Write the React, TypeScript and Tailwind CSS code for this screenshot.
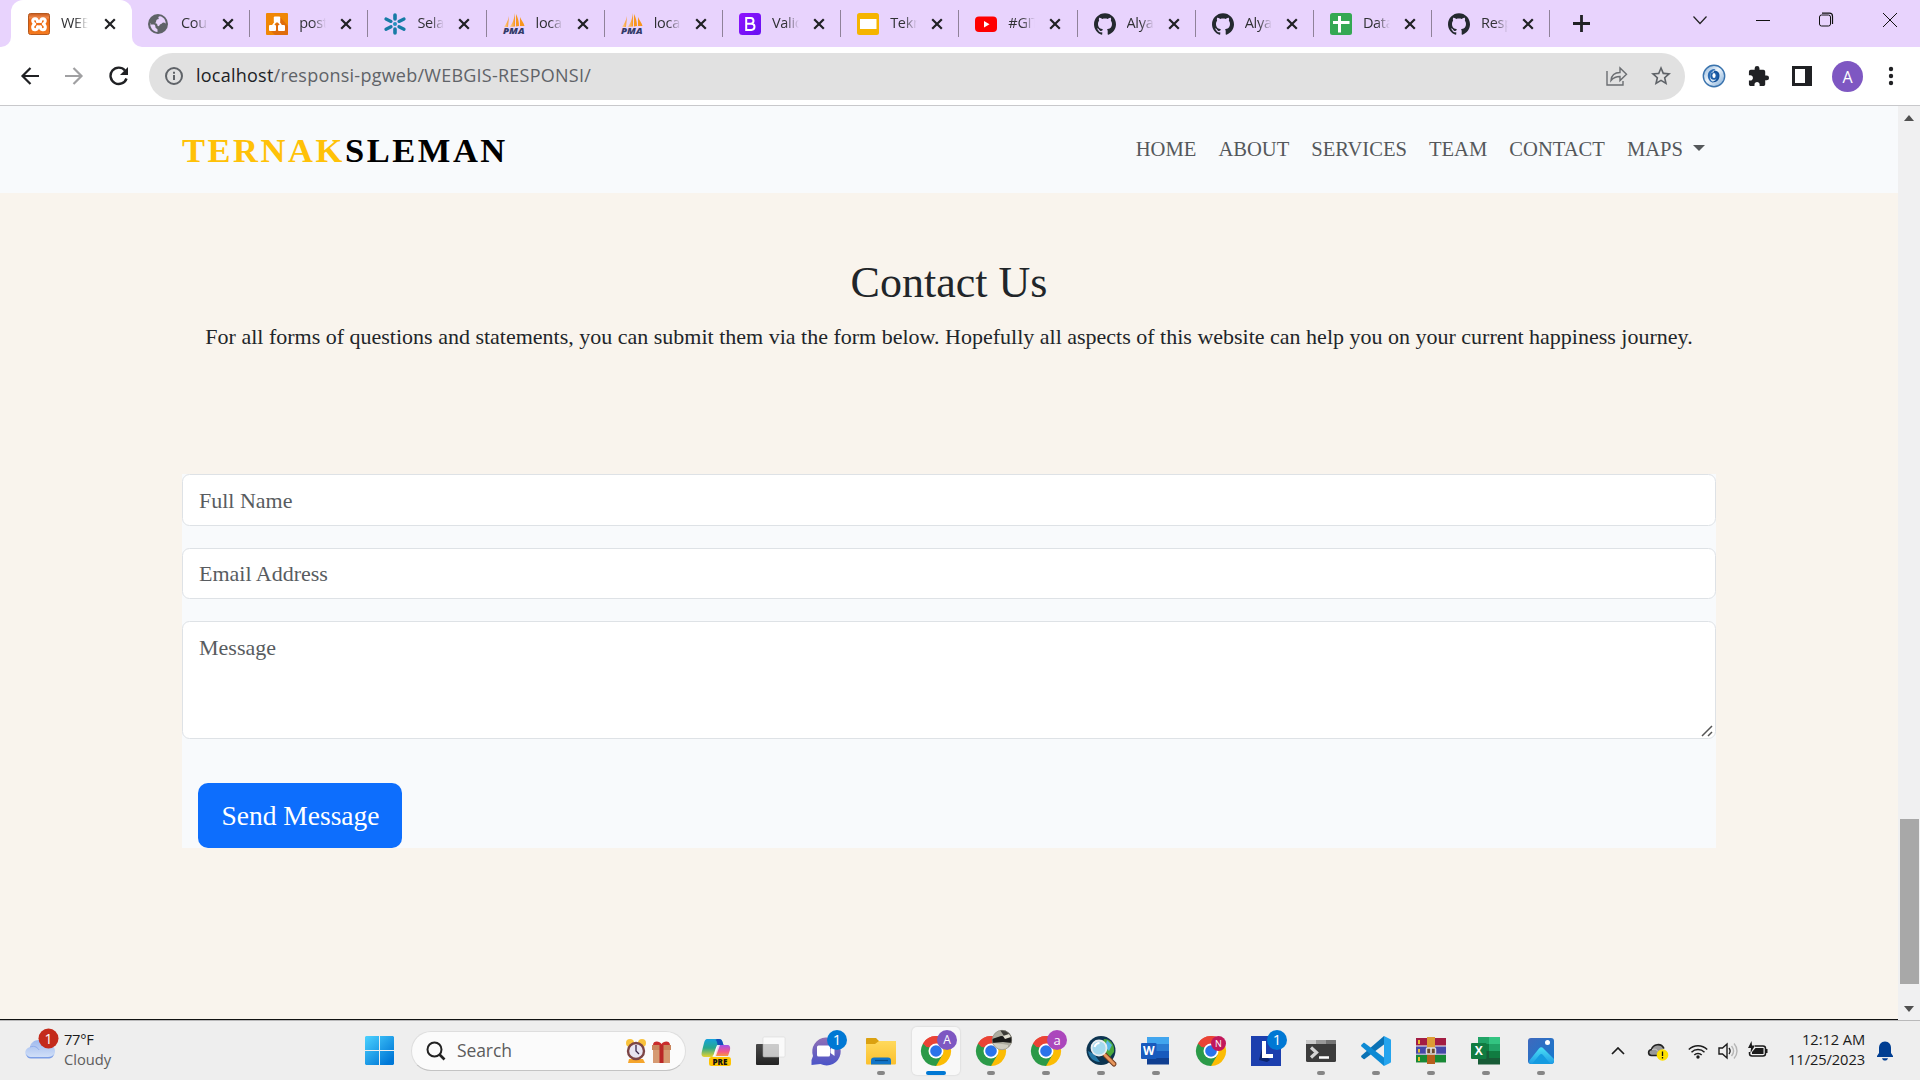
import React from "react";
import type { ReactNode } from "react";
import { SiGithub } from "react-icons/si";
import { MdStarBorder, MdExtension } from "react-icons/md";

const UI = "font-['Open_Sans','Noto_Sans',sans-serif]";
const SERIF = "font-['Liberation_Serif',serif]";

/* ---------- tab icons ---------- */
const svg22 = "block h-[22px] w-[22px] shrink-0 overflow-visible";

function Xampp() {
  return (
    <svg viewBox="0 0 22 22" className={svg22}>
      <defs>
        <linearGradient id="xa" x2="0" y2="1">
          <stop offset="0" stopColor="#c8591c" /><stop offset=".2" stopColor="#f08a4a" /><stop offset=".3" stopColor="#ec6510" /><stop offset="1" stopColor="#f47b20" />
        </linearGradient>
      </defs>
      <rect x=".5" y=".5" width="21" height="21" rx="2" fill="url(#xa)" stroke="#b4581e" />
      <g fill="none" stroke="#fff" strokeWidth="3" strokeLinecap="round" strokeLinejoin="round">
        <path d="M9.500 8.500C9.500 4.800 4.500 5 4.700 8c.1 1.500 1 2.300 2 3-1.500 1-2.200 2-2 3.500.3 3 5 3 5-.8M12.500 8.500C12.500 4.800 17.500 5 17.300 8c-.1 1.500-1 2.300-2 3 1.500 1 2.200 2 2 3.500-.3 3-5 3-5-.8" />
        <path d="M9.500 8.500h3M9.500 13.700h3" strokeWidth="2.600" />
      </g>
    </svg>
  );
}
function Globe() {
  return (
    <svg viewBox="0 0 22 22" className={svg22}>
      <circle cx="10" cy="11" r="10" fill="#5f6368" />
      <path d="M12 3.300 C10 3.500 10 5 11 6 C9 6 8 7 8 9 C8 10 6.500 10 5.500 10 H2.200 C2 13 3 15.500 5 17 C6.500 18 8 18.700 9.500 18.800 V16 C8 15.500 8.500 14 10 13.500 C12 13 11 11.500 13 11 C14 11 14 9.500 15.500 9.500 C17 9.500 17.500 10.500 17.700 11 C18 7 15.500 4 12 3.300Z" fill="#e8d3fd" />
      <path d="M2.500 10h4c2 0 3 1 3 2.500s3.500 1 4 3L10 20l-5-2-3-4z" fill="#5f6368" />
      <path d="M2.300 11.500h3.500c1.500 0 1.700 2 1.700 3s2 1 2 2v2.400C5.500 18.800 2.500 15.500 2.300 11.500Z" fill="#e8d3fd" />
    </svg>
  );
}
function Drawio() {
  return (
    <svg viewBox="0 0 22 22" className={svg22}>
      <rect width="22" height="22" rx="1" fill="#f08705" />
      <path d="M14 4l8 9v8a1 1 0 0 1-1 1H9l-5-5 6-6z" fill="#df6c0c" />
      <path d="M10 8l-3.500 5M12 8l3.500 5" stroke="#fff" strokeWidth="1.800" />
      <rect x="7.800" y="3.500" width="6.400" height="6" rx="1" fill="#fff" />
      <rect x="3" y="12" width="7" height="6" rx="1" fill="#fff" />
      <rect x="12" y="12" width="7" height="6" rx="1" fill="#fff" />
    </svg>
  );
}
function Snow() {
  return (
    <svg viewBox="0 0 22 22" className={svg22}>
      <g stroke="#177ba6" strokeWidth="3.600" strokeLinecap="round" fill="none">
        <path d="M11 2v4M11 16v4" />
        <path d="M2 6l5 2.400M20 6l-5 2.400M2 16.200l5-2.500M20 16.200l-5-2.500" strokeWidth="3.300" />
      </g>
      <circle cx="11" cy="11" r="2" fill="#2691bd" />
    </svg>
  );
}
function Pma() {
  return (
    <svg viewBox="0 0 22 22" className={svg22}>
      <defs><linearGradient id="pm"><stop offset="0" stopColor="#fbd9b0" /><stop offset="1" stopColor="#f8961d" /></linearGradient></defs>
      <path d="M6 3L5 14H1C3 11 5 8 6 3Z" fill="url(#pm)" />
      <path d="M12 0C11 6 10 10 6.500 14L12 13.500Z" fill="url(#pm)" />
      <path d="M13 1C15 5 16 9 16 13l-3 .5ZM17 4c1 3 4 6 4.500 9L17 13Z" fill="#f8961d" />
      <text x="0" y="21" fontSize="8.500" fontWeight="800" fontStyle="italic" fontFamily="Open Sans" fill="#333a68" textLength="21.500" lengthAdjust="spacingAndGlyphs">PMA</text>
    </svg>
  );
}
function Boot() {
  return (
    <svg viewBox="0 0 22 22" className={svg22}>
      <defs><linearGradient id="bs" x2="1" y2="1"><stop offset="0" stopColor="#9013fe" /><stop offset="1" stopColor="#6610f2" /></linearGradient></defs>
      <rect width="22" height="22" rx="3.500" fill="url(#bs)" />
      <path d="M7.200 5h4.700a2.900 2.900 0 0 1 .4 5.700H7.200zM7.200 10.700h5.200a3.100 3.100 0 0 1 0 6.200H7.200z" fill="none" stroke="#fff" strokeWidth="2" />
    </svg>
  );
}
function Slides() {
  return (
    <svg viewBox="0 0 22 22" className={svg22}>
      <rect width="22" height="22" rx="2.500" fill="#f5b400" /><rect x="3" y="6" width="16.500" height="10" fill="#fff" />
    </svg>
  );
}
function Youtube() {
  return (
    <svg viewBox="0 0 22 22" className={svg22}>
      <rect y="3.500" width="22" height="15.500" rx="4" fill="#f00" /><path d="M9 8v6.500l5.500-3.250z" fill="#fff" />
    </svg>
  );
}
function Github() {
  return <SiGithub className="block h-[22px] w-[22px] shrink-0 text-[#24292f]" />;
}
function Sheets() {
  return (
    <svg viewBox="0 0 22 22" className={svg22}>
      <rect width="22" height="22" rx="2.500" fill="#34a853" /><path d="M9.500 3v16.500M3 9.500h16.500" stroke="#fff" strokeWidth="3" />
    </svg>
  );
}

const tabs: { icon: ReactNode; title: string }[] = [
  { icon: <Globe />, title: "Cour" },
  { icon: <Drawio />, title: "post" },
  { icon: <Snow />, title: "Sela" },
  { icon: <Pma />, title: "loca" },
  { icon: <Pma />, title: "loca" },
  { icon: <Boot />, title: "Valid" },
  { icon: <Slides />, title: "Tekn" },
  { icon: <Youtube />, title: "#GIT" },
  { icon: <Github />, title: "Alya" },
  { icon: <Github />, title: "Alya" },
  { icon: <Sheets />, title: "Data" },
  { icon: <Github />, title: "Resp" },
];

function CloseX() {
  return (
    <svg viewBox="0 0 12 12" className="block h-3 w-3 shrink-0">
      <path d="M1.200 1.200l9.600 9.600M10.800 1.200L1.200 10.800" stroke="#202124" strokeWidth="2.200" />
    </svg>
  );
}
function TabTitle({ children }: { children: ReactNode }) {
  return (
    <span className="ml-[11px] w-[27px] shrink-0 overflow-hidden whitespace-nowrap pb-px text-[14.5px] leading-[22px] tracking-[-0.3px] text-[#303134] [mask-image:linear-gradient(to_right,black_50%,transparent)]">
      {children}
    </span>
  );
}

function TabStrip() {
  return (
    <div className="flex h-[47px] shrink-0 bg-[#e8d3fd]">
      <div className="flex h-[47px] w-[11px] items-end bg-white"><div className="h-full w-full rounded-br-[10px] bg-[#e8d3fd]" /></div>
      <div className="bg-[#e8d3fd]">
        <div className="flex h-[47px] w-[121px] items-center rounded-t-[12px] bg-white pl-[17px]">
          <Xampp />
          <TabTitle>WEBG</TabTitle>
          <span className="w-[16px]" />
          <CloseX />
        </div>
      </div>
      <div className="bg-white">
        <div className="flex h-[47px] rounded-bl-[10px] bg-[#e8d3fd]">
          {tabs.map((t, i) => (
            <div key={i} className="flex h-[47px] w-[118.2px] shrink-0 items-center pl-4">
              {t.icon}
              <TabTitle>{t.title}</TabTitle>
              <span className="w-[14px] shrink-0" />
              <CloseX />
              <span className="ml-auto h-[27px] w-px bg-[#8f8299]" />
            </div>
          ))}
        </div>
      </div>
      <svg viewBox="0 0 17 17" className="ml-[23px] mt-[15px] h-[17px] w-[17px]"><path d="M8.500 0v17M0 8.500h17" stroke="#202124" strokeWidth="2.800" /></svg>
      <div className="ml-auto mr-[22px] flex h-10 items-center">
        <svg viewBox="0 0 16 16" className="mr-[48px] h-4 w-4"><path d="M1.500 4.500l6.500 7 6.500-7" fill="none" stroke="#222" strokeWidth="1.200" /></svg>
        <svg viewBox="0 0 14 14" className="mr-[48px] h-[14px] w-[14px]"><path d="M0 7.500h14" stroke="#111" /></svg>
        <svg viewBox="0 0 16 16" className="mr-[48px] h-4 w-4"><rect x="1.500" y="3" width="11" height="11" rx="2" fill="none" stroke="#111" /><path d="M4 1.200h7.500a3 3 0 0 1 3 3V12" fill="none" stroke="#111" strokeWidth="1.200" /></svg>
        <svg viewBox="0 0 16 16" className="h-4 w-4"><path d="M1 1l14 14M15 1L1 15" stroke="#111" /></svg>
      </div>
    </div>
  );
}

function Toolbar() {
  return (
    <div className="flex h-[59px] shrink-0 items-center border-b border-[#c8c8cb] bg-white">
      <svg viewBox="0 0 20 20" className="ml-[20px] h-5 w-5"><path d="M19 10H3M10.500 2L2.500 10l8 8" fill="none" stroke="#202124" strokeWidth="2.200" /></svg>
      <svg viewBox="0 0 20 20" className="ml-[24px] h-5 w-5"><path d="M1 10h16M9.500 2l8 8-8 8" fill="none" stroke="#a0a0a2" strokeWidth="2.200" /></svg>
      <svg viewBox="0 0 20 20" className="ml-[25px] h-5 w-5"><path d="M17.500 12.500A8.200 8.200 0 1 1 16 4.500" fill="none" stroke="#202124" strokeWidth="2.400" /><path d="M19 1v8h-8z" fill="#202124" /></svg>
      <div className="ml-[20px] flex h-[47px] w-[1536px] items-center rounded-full bg-[#e1e1e1] pl-4">
        <svg viewBox="0 0 18 18" className="h-[18px] w-[18px]"><circle cx="9" cy="9" r="8" fill="none" stroke="#5f6368" strokeWidth="2" /><path d="M9 8v5M9 4.800v2" stroke="#5f6368" strokeWidth="2" /></svg>
        <span className="ml-[13px] whitespace-nowrap pb-[2px] text-[18px] tracking-[0.24px] text-[#5f6368]"><span className="text-[#202124]">localhost</span>/responsi-pgweb/WEBGIS-RESPONSI/</span>
        <svg viewBox="0 0 22 20" className="ml-auto h-5 w-[22px]"><g fill="none" stroke="#6b6e72" strokeWidth="1.400"><path d="M1 5v14h16v-4" /><path d="M5 14.500C5.500 9 8.500 6.500 14 6.500V2l6.500 6.300L14 14.500V10.500C10 10.500 7.500 11.500 5 14.500Z" /></g></svg>
        <MdStarBorder className="ml-[21px] mr-[12px] h-6 w-6 text-[#5f6368]" />
      </div>
      <svg viewBox="0 0 24 24" className="ml-[17px] h-6 w-6">
        <defs><linearGradient id="idm" x2="1" y2="1"><stop offset="0" stopColor="#86aed6" /><stop offset=".45" stopColor="#eef5fb" /><stop offset="1" stopColor="#7aa8d6" /></linearGradient></defs>
        <circle cx="12" cy="12" r="10.700" fill="url(#idm)" stroke="#3a73ad" strokeWidth="1.400" />
        <path d="M13.500 5C7 4.500 4.500 10 6.500 15c1 2.500 3 3.500 5 3.500-3-2-4-4.500-3.500-7C8.500 8.500 11 7 13.500 5Z" fill="#2b6cb5" />
        <path d="M12 6.500c5 0 6.500 4 5 8C16 17.500 13 19 9.500 18c3.500-.5 5.500-2.500 5.500-5.500 0-2-1-3.500-3.500-3.800Z" fill="#15539c" />
        <circle cx="12" cy="12" r="3.800" fill="#1d5fa9" /><ellipse cx="12" cy="11.500" rx="1.600" ry="2.600" fill="#fff" />
      </svg>
      <MdExtension className="ml-[21px] h-[23px] w-[23px] text-[#202124]" />
      <svg viewBox="0 0 20 20" className="ml-[22px] h-5 w-5"><rect x="1.500" y="1.500" width="17" height="17" fill="none" stroke="#202124" strokeWidth="3" /><path d="M13 1h6v18h-6z" fill="#202124" /></svg>
      <div className="ml-[20px] mt-px flex h-[31px] w-[31px] items-center justify-center rounded-full bg-[#7e57c2] text-[16px] text-white">A</div>
      <svg viewBox="0 0 6 20" className="ml-[25px] h-5 w-[6px]"><g fill="#202124"><circle cx="3" cy="3" r="2.200" /><circle cx="3" cy="10" r="2.200" /><circle cx="3" cy="17" r="2.200" /></g></svg>
    </div>
  );
}

/* ---------- page ---------- */
const field = "rounded-[7.5px] border border-[#dee2e6] bg-white pl-[16px] text-[22px] leading-[33px] text-[#585c60]";

function Page() {
  return (
    <div className={"flex min-w-0 flex-1 flex-col border-b border-[#111] bg-[#f9f4ed] " + SERIF}>
      <nav className="flex h-[87px] shrink-0 items-center justify-between bg-[#f8fafc] pl-[182px] pr-[193px]">
        <div className="whitespace-nowrap pt-[2px] text-[34.5px] font-bold tracking-[2.55px] text-black"><span className="text-[#ffc107]">TERNAK</span>SLEMAN</div>
        <div className="flex items-center gap-[22px] text-[20.6px] text-[#55585b]">
          {["HOME", "ABOUT", "SERVICES", "TEAM", "CONTACT", "MAPS"].map((n) => <span key={n}>{n}</span>)}
          <span className="-ml-[12px] mt-[-2px] h-0 w-0 border-x-[6px] border-t-[6px] border-x-transparent border-t-[#55585b]" />
        </div>
      </nav>
      <div className="flex flex-1 flex-col px-[182px] pt-[63px] text-center text-[#212529]">
        <h2 className="text-[44px] leading-[53px]">Contact Us</h2>
        <p className="mt-[11px] whitespace-nowrap text-[22px] leading-[33px]">For all forms of questions and statements, you can submit them via the form below. Hopefully all aspects of this website can help you on your current happiness journey.</p>
        <div className="mt-[121px] flex flex-col bg-[#f8fafc] text-left">
          <div className={"h-[52px] pt-[9px] " + field}>Full Name</div>
          <div className={"mt-[22px] h-[51px] pt-[8px] " + field}>Email Address</div>
          <div className={"mt-[22px] flex h-[118px] items-start justify-between pt-[9px] " + field}>
            Message
            <svg viewBox="0 0 12 12" className="mr-[2px] mb-[1px] h-3 w-3 self-end"><path d="M1 11L11 1M7 11l4-4" stroke="#555" strokeWidth="1.500" /></svg>
          </div>
          <div className="ml-4 mt-[44px] flex h-[65px] w-[204px] items-center justify-center rounded-[10px] bg-[#0d6efd] pl-px text-[27.5px] text-white">Send Message</div>
        </div>
      </div>
    </div>
  );
}

function Scrollbar() {
  return (
    <div className="flex w-[22px] shrink-0 flex-col items-center bg-[#f0f0f1]">
      <span className="mt-[9px] h-0 w-0 border-x-[5.5px] border-b-[6px] border-x-transparent border-b-[#505050]" />
      <span className="mt-[698px] h-[165px] w-[19px] bg-[#a8a8a8]" />
      <span className="mt-[22px] h-0 w-0 border-x-[5.5px] border-t-[6px] border-x-transparent border-t-[#505050]" />
    </div>
  );
}

/* ---------- taskbar ---------- */
function Chrome() {
  return (
    <g>
      <path d="M24 24L11 16.500A15 15 0 0 1 37 16.500H24Z" fill="#ea4335" />
      <path d="M24 24V16.500H37A15 15 0 0 1 24 39Z" fill="#fbbc04" />
      <path d="M24 24L11 16.500A15 15 0 0 0 24 39L30.500 27.800Z" fill="#2b9a48" />
      <path d="M11 16.500A15 15 0 0 1 37 16.500H24a7.500 7.500 0 0 0-6.500 3.800L14.500 20z" fill="#ea4335" />
      <circle cx="24" cy="24" r="7.500" fill="#fff" /><circle cx="24" cy="24" r="5.800" fill="#2a73ea" />
    </g>
  );
}
function Badge({ cx, cy, r, fill, t, size }: { cx: number; cy: number; r: number; fill: string; t: string; size: number }) {
  return (
    <g><circle cx={cx} cy={cy} r={r} fill={fill} /><text x={cx} y={cy + size * 0.36} textAnchor="middle" fontSize={size} fontFamily="Open Sans" fontWeight="500" fill="#fff">{t}</text></g>
  );
}

const apps: { icon: ReactNode; run?: boolean; active?: boolean }[] = [
  { icon: (
    <g>
      <defs><linearGradient id="c1" x2="0" y2="1"><stop offset="0" stopColor="#16a2dc" /><stop offset=".5" stopColor="#28a88c" /><stop offset="1" stopColor="#e9d22c" /></linearGradient><linearGradient id="c2" x2="0" y2="1"><stop offset="0" stopColor="#a353ea" /><stop offset=".6" stopColor="#f2568a" /><stop offset="1" stopColor="#f9983f" /></linearGradient></defs>
      <path d="M15 12h12c2 0 3 1 3.500 3l1 3h-4c-2 0-3 1-4 4l-2 6c-.6 2-1.500 2-3 2h-5c-4 0-4.500-2-3.500-6l2-8c1-3 1.500-4 3-4Z" fill="url(#c1)" />
      <path d="M25 12h2c2 0 3 1 3.500 3l1 3h-6c0-2-1-5-2-5z" fill="#1450ba" />
      <path d="M27 18h8c3 0 3.500 2 3 5l-2 6H23l2-7c.7-3 1-4 2-4Z" fill="url(#c2)" />
      <path d="M25 18h3l-4 11h-4c1 0 2-1 2.500-3z" fill="#fff" opacity=".75" />
      <rect x="17" y="30" width="22" height="9" rx="2.500" fill="#ffc400" /><text x="28" y="37.500" textAnchor="middle" fontFamily="Open Sans" fontWeight="800" fontSize="8" fill="#111">PRE</text>
    </g>) },
  { icon: (
    <g>
      <defs><linearGradient id="tv" x2="0" y2="1"><stop offset="0" stopColor="#494949" /><stop offset="1" stopColor="#232323" /></linearGradient></defs>
      <rect x="9" y="17" width="23" height="21" rx="1" fill="url(#tv)" /><rect x="16" y="10" width="22" height="20" rx="1" fill="#fff" opacity=".72" stroke="#d0d0d0" strokeWidth=".6" />
    </g>) },
  { icon: (
    <g>
      <defs><linearGradient id="ct" x2="0" y2="1"><stop offset="0" stopColor="#9170b5" /><stop offset="1" stopColor="#4a54c8" /></linearGradient></defs>
      <path d="M23.500 10.500a14 14 0 1 1-5 26.500L9.500 38v-5l1.500-4a14 14 0 0 1 12.500-18.500Z" fill="url(#ct)" />
      <rect x="15" y="18.500" width="13" height="11" rx="1.500" fill="#fff" /><path d="M28.500 22l4-3v10l-4-3z" fill="#fff" />
      <Badge cx={35} cy={13} r={10} fill="#0078d4" t="1" size={15} />
    </g>) },
  { run: true, icon: (
    <g>
      <defs><linearGradient id="fe" x2="0" y2="1"><stop offset="0" stopColor="#ffd95c" /><stop offset="1" stopColor="#fbc02d" /></linearGradient></defs>
      <path d="M9 12c0-1 .5-1 1-1h9l3 3h16v8H9z" fill="#dba110" /><path d="M9 17h9l4-3h17v22c0 1-.5 1.500-1.500 1.500h-27C9.500 37.500 9 37 9 36z" fill="url(#fe)" />
      <path d="M14 37.500v-4c0-2 1-3 3-3h14c2 0 3 1 3 3v4z" fill="#1075c8" /><path d="M18 33.500h13" stroke="#074e8c" strokeWidth="1.200" />
    </g>) },
  { active: true, icon: <g><Chrome /><Badge cx={35} cy={13} r={10} fill="#7e57c2" t="A" size={12} /></g> },
  { run: true, icon: (
    <g><Chrome /><defs><clipPath id="ph"><circle cx="35" cy="13" r="10" /></clipPath></defs><g clipPath="url(#ph)"><path d="M25 3h20v20H25z" fill="#aeada0" /><path d="M33 3h12v9l-8-3z" fill="#3d3c36" /><path d="M25 12l9-3 11 1v6l-9-1-11 1z" fill="#1b1b19" /><path d="M36 9l6-2 2 3-6 2z" fill="#e2e0d2" /><path d="M25 16l10 1 6 1v5H25z" fill="#cfcdc0" /></g><circle cx="35" cy="13" r="9.700" fill="none" stroke="#8b8a80" strokeWidth=".6" /></g>) },
  { run: true, icon: <g><Chrome /><Badge cx={35} cy={13} r={10} fill="#ab47bc" t="a" size={13} /></g> },
  { run: true, icon: (
    <g>
      <circle cx="24" cy="23.500" r="14.500" fill="#0c3450" /><path d="M27 12c7 0 11 6 10 13l-4 5-5-4 2-6-5-3z" fill="#4aa83c" /><path d="M11 24l6 3 6 8c-6 0-11-4-12-11z" fill="#2579a8" /><path d="M30 13l5 5-3 6-4-4z" fill="#58b7e5" />
      <path d="M28 28l9 9" stroke="#70391d" strokeWidth="5" strokeLinecap="round" /><path d="M28 28l9 9" stroke="#e7965b" strokeWidth="3" strokeLinecap="round" />
      <circle cx="22" cy="21" r="7.500" fill="#a4d9ee" stroke="#e7ecef" strokeWidth="1.800" /><path d="M17.500 20c1-2.500 2.500-4 5-4" stroke="#fff" strokeWidth="2" fill="none" />
    </g>) },
  { run: true, icon: (
    <g>
      <path d="M15 10h22v7H15z" fill="#41a5ee" /><path d="M15 17h22v7H15z" fill="#2b7cd3" /><path d="M15 24h22v7H15z" fill="#185abd" /><path d="M15 31h22v6.500H15z" fill="#103f91" />
      <rect x="9" y="16" width="15.500" height="16" rx="1" fill="#185abd" /><text x="16.700" y="28.300" textAnchor="middle" fontFamily="Open Sans" fontWeight="700" fontSize="12" fill="#fff">W</text>
    </g>) },
  { icon: <g><Chrome /><Badge cx={31.5} cy={16.500} r={7.500} fill="#c2185b" t="N" size={9} /></g> },
  { icon: <g><path d="M9 9h30v30H9z" fill="#1c3fae" /><path d="M17 33l5-19v13l6 6-3 2z" fill="#0b246c" /><path d="M20 14h4v13h7v4H20z" fill="#fff" /><Badge cx={35} cy={13} r={10} fill="#0078d4" t="1" size={15} /></g> },
  { run: true, icon: (
    <g>
      <rect x="9" y="13" width="30" height="22" rx="1.500" fill="#3c3c3c" /><path d="M9 17v-3c0-.6.500-1 1-1h9v4z" fill="#cbcbcb" /><path d="M19 13h10v4H19z" fill="#999" /><path d="M29 13h9c.5 0 1 .4 1 1v3H29z" fill="#747474" />
      <path d="M14 20.500l5.500 5-5.500 5" fill="none" stroke="#d5d5d5" strokeWidth="3.200" /><path d="M22 30.500h10" stroke="#fff" strokeWidth="2.500" />
    </g>) },
  { run: true, icon: (
    <g>
      <path d="M32 9l6 3c.7.400 1 .7 1 1.500v21c0 .800-.3 1.200-1 1.500l-6 3z" fill="#24a4ee" />
      <path d="M32 9L9.500 28.500c-.6.600-.6 1.200 0 1.800l1.600 1.500c.6.500 1 .500 1.600.100L32 17.500z" fill="#0a72b5" />
      <path d="M32 39L9.500 19.500c-.6-.6-.6-1.200 0-1.800l1.600-1.500c.6-.5 1-.5 1.600-.1L32 30.500z" fill="#0d8ad4" />
    </g>) },
  { run: true, icon: (
    <g>
      <path d="M9 11h30v8H9z" fill="#a31d43" /><path d="M9 19.500h30v8H9z" fill="#4648a8" /><path d="M9 28h30v8H9z" fill="#178a35" />
      <path d="M12 13v4M12 22v3.500M12 30v4" stroke="#e8bd2e" strokeWidth="2" /><path d="M9 18.500h30M9 27h30M9 35.500h30" stroke="#ddd" strokeWidth="1" opacity=".6" />
      <path d="M20 10h8v14h-8z" fill="#dc9d35" /><path d="M20 26h8v11h-8z" fill="#b65f1d" /><rect x="19.500" y="21" width="9" height="6" rx="1" fill="#6d4a2c" stroke="#ddd" strokeWidth="1.500" /><path d="M24 21v5" stroke="#eee" strokeWidth="1.500" />
    </g>) },
  { run: true, icon: (
    <g>
      <path d="M16 10h11v7H16z" fill="#21a366" /><path d="M27 10h11v7H27z" fill="#33c481" /><path d="M16 17h11v7H16z" fill="#107c41" /><path d="M27 17h11v7H27z" fill="#21a366" /><path d="M16 24h11v7H16z" fill="#185c37" /><path d="M27 24h11v7H27z" fill="#107c41" /><path d="M16 31h22v6.500H16z" fill="#185c37" />
      <rect x="9" y="16" width="15.500" height="16" rx="1" fill="#107c41" /><text x="16.700" y="28.300" textAnchor="middle" fontFamily="Open Sans" fontWeight="700" fontSize="12" fill="#fff">X</text>
    </g>) },
  { run: true, icon: (
    <g>
      <defs><linearGradient id="p1" x2="1" y2="1"><stop offset="0" stopColor="#3f69bd" /><stop offset="1" stopColor="#1379ce" /></linearGradient><linearGradient id="p2" x2="0" y2="1"><stop offset="0" stopColor="#4be0f5" /><stop offset="1" stopColor="#1e9ce5" /></linearGradient></defs>
      <rect x="11" y="11" width="26" height="26" rx="3" fill="url(#p1)" /><path d="M12 34l10-12.500c1.500-1.800 3-1.800 4.500 0L37 32v2c0 2-1 3-3 3H14c-1 0-2-1-2-3z" fill="url(#p2)" /><path d="M15 37l7.500-9c1.200-1.500 2.300-1.500 3.500 0l7.500 9z" fill="#159be0" /><circle cx="30.500" cy="15.500" r="2.500" fill="#fff" />
    </g>) },
];

function Taskbar() {
  return (
    <div className="flex h-[60px] shrink-0 items-center border-t border-[#b9b9ba] bg-[#eeeeee]">
      <svg viewBox="0 0 40 48" className="ml-[22px] h-12 w-10 shrink-0">
        <defs><linearGradient id="cl" x2="0" y2="1"><stop offset="0" stopColor="#9fb9ee" /><stop offset="1" stopColor="#d3e1f8" /></linearGradient></defs>
        <path d="M9 31c-7 0-8-9-1-11 1-7 11-10 16-3 5-1 9 3 9 7s-2 7-6 7z" fill="url(#cl)" /><path d="M4 27c2 3 4 3 6 3h16c3 0 5-1 6-3-1 3-2 4.500-6 4.500H9c-3 0-4-1.500-5-4.500z" fill="#7c9ee6" />
        <path d="M8 20c5-2 8 1 9 3" stroke="#8facec" fill="none" />
        <Badge cx={26.500} cy={11.5} r={10} fill="#c42b1c" t="1" size={14} />
      </svg>
      <div className="ml-[2px] flex w-[301px] flex-col pb-[3px] text-[14.7px] leading-5">
        <span className="tracking-[-0.3px] text-[#1b1b1b]">77°F</span><span className="text-[#5d5d5d]">Cloudy</span>
      </div>
      <svg viewBox="0 0 29 29" className="h-[29px] w-[29px] shrink-0">
        <defs><linearGradient id="wg" gradientUnits="userSpaceOnUse" x1="0" y1="0" x2="24" y2="26"><stop offset="0" stopColor="#4cd2ff" /><stop offset="1" stopColor="#0078d7" /></linearGradient></defs>
        <path d="M1 0h13v14H0V1zM15 0h13l1 1v13H15zM0 15h14v14H1l-1-1zM15 15h14v13l-1 1H15z" fill="url(#wg)" />
      </svg>
      <div className="ml-[17px] flex h-[40px] w-[275px] shrink-0 items-center rounded-full border border-[#dedede] border-b-[#c4c4c4] bg-[#fbfbfb]">
        <svg viewBox="0 0 20 20" className="ml-[14px] h-5 w-5"><circle cx="8.500" cy="8.500" r="7" fill="none" stroke="#222" strokeWidth="2" /><path d="M13.500 13.500l5 5" stroke="#222" strokeWidth="2.600" /></svg>
        <span className="ml-[11px] text-[17.5px] tracking-[-0.1px] text-[#5c5c5c]">Search</span>
        <svg viewBox="0 0 46 26" className="ml-auto mr-[14px] h-[26px] w-[46px]">
          <circle cx="5" cy="5" r="4" fill="#f9c23c" /><circle cx="17" cy="5" r="4" fill="#f9c23c" /><path d="M4 21h14l2 4H3z" fill="#f5a52c" />
          <circle cx="11" cy="13" r="8" fill="#e8e5f2" stroke="#7c4546" strokeWidth="2.400" /><path d="M11 7v6l3 3" fill="none" stroke="#372648" strokeWidth="1.300" />
          <path d="M27 7h19v5H27z" fill="#c9855c" /><path d="M28 12h17v13H28z" fill="#d69a72" /><path d="M34.500 6h4v19h-4z" fill="#ba2727" /><path d="M28 7c0-5 7-4 8.500-1C38 3 45 2 45 7z" fill="#c92b2b" />
        </svg>
      </div>
      <div className="ml-[2px] flex shrink-0">
        {apps.map((a, i) => (
          <div key={i} className="flex w-[55px] justify-center">
            <div className={"relative h-12 w-12 rounded-[5px] " + (a.active ? "bg-[#f8f8f8] shadow-[0_0_1px_1px_#e2e2e2]" : "")}>
              <svg viewBox="0 0 48 48" className="block h-12 w-12">{a.icon}</svg>
              {a.active && <span className="absolute bottom-0 left-[14px] h-1 w-5 rounded-full bg-[#0078d4]" />}
              {a.run && <span className="absolute bottom-0 left-5 h-1 w-2 rounded-full bg-[#868686]" />}
            </div>
          </div>
        ))}
      </div>
      <div className="ml-auto flex items-center">
        <svg viewBox="0 0 14 8" className="mr-[22px] h-2 w-[14px]"><path d="M1 7l6-6 6 6" fill="none" stroke="#1b1b1b" strokeWidth="1.700" /></svg>
        <svg viewBox="0 0 22 22" className="mr-[19px] h-[22px] w-[22px]">
          <path d="M4.500 15.500C1 15 1 10 4.500 9.500 6 4 14 2.500 17 8.500l-7 7z" fill="#999" /><path d="M10 15.500H4.500C.5 15 .8 10 4.500 9.500 6 4 14 2.500 17 8.500" fill="none" stroke="#222" strokeWidth="1.600" /><path d="M5 9.500c3-1 5 0 6 2" fill="none" stroke="#ccc" />
          <circle cx="15.500" cy="15" r="5.800" fill="#fee100" /><path d="M15.500 11.500V16M15.500 17v1.500" stroke="#111" strokeWidth="1.300" />
        </svg>
        <svg viewBox="0 0 20 16" className="mr-[10px] h-4 w-5"><g fill="none" stroke="#1b1b1b" strokeWidth="1.500"><path d="M.8 6.500a13 13 0 0 1 18.400 0M3.500 9.300a9.200 9.200 0 0 1 13 0M6.300 12a5.200 5.200 0 0 1 7.400 0" /></g><circle cx="10" cy="14" r="1.700" fill="#1b1b1b" /></svg>
        <svg viewBox="0 0 20 18" className="mr-[10px] h-[18px] w-5"><path d="M1 6h3.500L9 2v14l-4.500-4H1z" fill="none" stroke="#1b1b1b" strokeWidth="1.400" /><path d="M11 6c1.500 2 1.500 4 0 6" fill="none" stroke="#1b1b1b" strokeWidth="1.300" /><path d="M13.500 4c2.500 3 2.500 7 0 10M16 1.500c4 4.500 4 10.500 0 15" fill="none" stroke="#b5b5b5" strokeWidth="1.400" /></svg>
        <svg viewBox="0 0 20 18" className="mb-[2px] h-[18px] w-5"><path d="M7 5h8c1.500 0 2.500 1 2.500 2.500v5c0 1.500-1 2.500-2.500 2.500H4c-1.500 0-2.500-1-2.500-2.500V11" fill="none" stroke="#1b1b1b" strokeWidth="1.500" /><path d="M7.500 7H15.500v6H4v-2z" fill="#1b1b1b" /><path d="M18 8h1.500v4H18zM3.500 0L0 7h3l-.5 5L7 4.500H4z" fill="#1b1b1b" /></svg>
        <div className="ml-[15px] flex w-[82px] flex-col whitespace-nowrap pb-[3px] text-right text-[14.7px] leading-5 tracking-[-0.1px] text-[#1b1b1b]"><span>12:12 AM</span><span>11/25/2023</span></div>
        <svg viewBox="0 0 16 20" className="ml-[12px] mr-[27px] h-5 w-4"><path d="M8 .500C12 .500 14 3.500 14 7v5l2 3v1H0v-1l2-3V7C2 3.500 4 .500 8 .500ZM5 17.200h6c-.5 1.500-1.500 2.300-3 2.300s-2.500-.8-3-2.300z" fill="#003e92" /></svg>
      </div>
    </div>
  );
}

export default function App() {
  return (
    <div className={"flex h-[1080px] w-[1920px] flex-col overflow-hidden " + UI}>
      <TabStrip />
      <Toolbar />
      <div className="flex h-[914px] shrink-0">
        <Page />
        <Scrollbar />
      </div>
      <Taskbar />
    </div>
  );
}
